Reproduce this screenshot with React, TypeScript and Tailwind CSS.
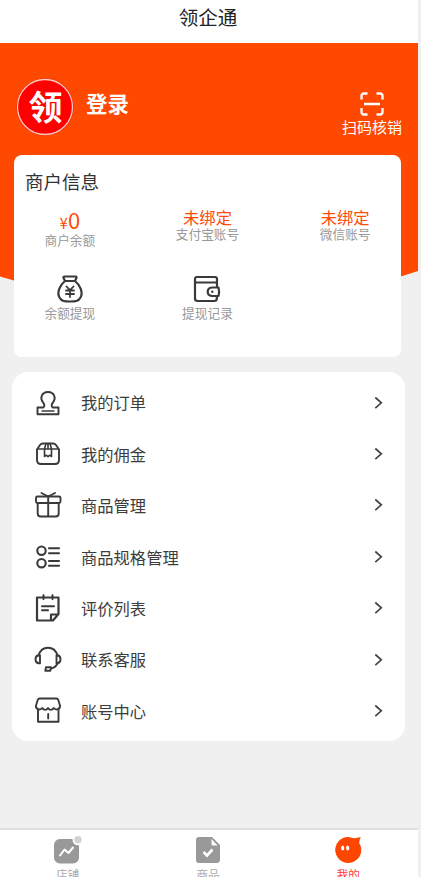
import type { ReactNode } from "react";

const Icon = ({ children }: { children: ReactNode }) => (
  <svg
    width="28"
    height="28"
    viewBox="0 0 28 28"
    fill="none"
    stroke="#3a3a3a"
    strokeWidth="1.9"
    strokeLinecap="round"
    strokeLinejoin="round"
    className="shrink-0"
  >
    {children}
  </svg>
);

const menuItems = [
  {
    label: "我的订单",
    icon: (
      <>
        <path d="M4 18.500h5.300c1.400-1 1.500-3-.3-5.200-1.500-1.900-2.200-4-1.300-6.300 2-5.300 10.600-5.300 12.600 0 .9 2.300.2 4.400-1.300 6.300-1.800 2.200-1.700 4.200-.3 5.200H24.500v6.700H3.500v-6.700z" />
        <path d="M8 22h12" strokeWidth="1.400" />
      </>
    ),
  },
  {
    label: "我的佣金",
    icon: (
      <>
        <path d="M3 9.500 6 5Q7 3.500 9 3.500h10q2 0 3 1.500l3 4.500V20q0 4-4 4H7q-4 0-4-4z" />
        <path
          d="M3.500 9h21M12 3.500 10.500 9v7.500l1.700-1.300 1.800 1.500 1.800-1.500 1.700 1.300V9L16 3.500M14 4v5"
          strokeWidth="1.600"
        />
      </>
    ),
  },
  {
    label: "商品管理",
    icon: (
      <>
        <rect x="2" y="5.500" width="24.500" height="6.500" rx="1.500" />
        <path d="M3.700 12v10.500q0 3 3 3h15q3 0 3-3V12M14.200 5.500v20M14.200 5.500 7.500 2M14.200 5.500 21 2" />
      </>
    ),
  },
  {
    label: "商品规格管理",
    icon: (
      <>
        <circle cx="7.500" cy="7.700" r="4.200" strokeWidth="2.100" />
        <circle cx="7.500" cy="20.200" r="4.200" strokeWidth="2.100" />
        <path d="M15 5.300h10M15 10.300h10M15 18h10M15 22.800h10" strokeWidth="2.100" />
      </>
    ),
  },
  {
    label: "评价列表",
    icon: (
      <>
        <path d="M3 3.500h21.500V20L19 26.500H3zM17 26v-5.500h7" strokeWidth="2.200" />
        <path d="M9.500 1.200V5M18.500 1.200V5M8 12.200h12M8 16.200h6" strokeWidth="2.100" />
      </>
    ),
  },
  {
    label: "联系客服",
    icon: (
      <>
        <path d="M4.500 9.500C6 4.500 9.500 1.700 14 1.700s8 2.800 9.500 7.800M23.500 17.500c-1.500 3-3.500 4.500-6.500 5" />
        <path d="M6 9.200H4.500q-3 .5-3 4t3 4H6zM22.500 9.200h1q3 .5 3 4t-3 4h-1zM12 21.300h5l-.7 3.400H11.300z" />
      </>
    ),
  },
  {
    label: "账号中心",
    icon: (
      <>
        <path d="M5.500 1.500h17q1.300 0 1.700 1.300L26 8.500c.5 4-4.500 5-6.300 2.500-1.500 2.500-4.200 2.500-5.700 0-1.500 2.500-4.200 2.500-5.700 0C6.500 13.500 1.500 12.500 2 8.500l1.800-5.700Q4.200 1.500 5.500 1.500z" />
        <path d="M4 12.500v12.300h20.500V12.500M14.200 17v4.500" />
      </>
    ),
  },
];

const MoneyBag = () => (
  <Icon>
    <path
      d="M9 6 7.500 2.800q-.5-1.300 1-1.300h11q1.500 0 1 1.300L19 6M9 6h10c5 4 8.500 11.500 5.500 16.500-2 4-5.500 4-10.500 4s-8.500 0-10.500-4C.5 17.500 4 10 9 6z"
      strokeWidth="2.200"
    />
    <path d="m10.500 11.500 3.500 3.700 3.500-3.700M10 15.500h8M10 19h8M14 15.500V22" strokeWidth="1.800" />
  </Icon>
);

const Wallet = () => (
  <Icon>
    <path
      d="M24 11.500V4.300q0-2.300-2-2.300H4Q2 2 2 4v19.500q0 2.500 2.500 2.500h17q2.300 0 2.300-2.500V22M2.500 7.500H24"
      strokeWidth="2.200"
    />
    <path d="M19 12.500h6.500q1.200 4.200 0 8.500H19q-4.300-.3-4.300-4.200T19 12.500z" strokeWidth="2.200" />
    <circle cx="19.300" cy="16.800" r=".6" strokeWidth="1.200" />
  </Icon>
);

const Stat = ({ value, label }: { value: string; label: string }) => (
  <div className="flex flex-col items-center pt-0.5">
    <span className="text-[16.300px] leading-[18px] text-[#ff4a08]">{value}</span>
    <span className="text-[12.700px] leading-[15px] text-[#999999]">{label}</span>
  </div>
);

const Header = () => (
  <div className="flex h-28 justify-between">
    <div className="flex pl-4 pt-[35px]">
      <svg width="58" height="58" viewBox="0 0 58 58">
        <circle cx="29" cy="29" r="28.500" fill="#e8100a" />
        <circle cx="29" cy="29" r="27.500" fill="#ff0000" stroke="#ffc8c0" strokeWidth="1.300" />
        <text
          x="29.500"
          y="41.500"
          textAnchor="middle"
          fill="#fff"
          fontSize="34"
          fontWeight="700"
          fontFamily="Noto Sans CJK SC, sans-serif"
        >
          领
        </text>
      </svg>
      <span className="ml-3 mt-[9px] text-[21.500px] leading-8 font-bold text-white">登录</span>
    </div>
    <div className="mr-4 flex flex-col items-center pt-[49px] text-white">
      <svg width="24" height="24" viewBox="0 0 24 24" fill="none" stroke="currentColor" strokeWidth="2.300">
        <path d="M1.500 7.500V4q0-2.500 2.500-2.500h3.500M16.500 1.500H20q2.500 0 2.500 2.500v3.500M22.500 16v4q0 2.500-2.500 2.500h-3.500M7.500 22.500H4q-2.500 0-2.500-2.500v-4M4 12h16" />
      </svg>
      <span className="text-[15px] leading-[22px]">扫码核销</span>
    </div>
  </div>
);

const MerchantCard = () => (
  <div className="mr-[17px] ml-3.5 h-[202px] rounded-lg bg-white pt-[14px]">
    <h2 className="pl-[11px] text-[18.500px] leading-[25px] text-[#333333]">商户信息</h2>
    <div className="-mx-[13px] mt-3 grid grid-cols-3">
      <div className="flex flex-col items-center pt-px">
        <span className="text-[22px] leading-[25px] text-[#ff4a08]">
          <span className="text-[15px]">¥</span>0
        </span>
        <span className="-mt-[3px] text-[12.700px] leading-[15px] text-[#999999]">商户余额</span>
      </div>
      <Stat value="未绑定" label="支付宝账号" />
      <Stat value="未绑定" label="微信账号" />
      <div className="mt-7 flex flex-col items-center">
        <MoneyBag />
        <span className="mt-px text-[12.700px] leading-[18px] text-[#999999]">余额提现</span>
      </div>
      <div className="mt-7 flex flex-col items-center">
        <Wallet />
        <span className="mt-px text-[12.700px] leading-[18px] text-[#999999]">提现记录</span>
      </div>
    </div>
  </div>
);

const TabBar = () => (
  <nav className="grid h-[49px] shrink-0 grid-cols-3 border-t-2 border-[#dedede] bg-white pt-1.5 text-[11.500px] leading-4 text-[#aaaaaa]">
    <div className="-ml-1 flex flex-col items-center">
      <svg width="30" height="28" viewBox="0 0 30 28">
        <rect x="1" y="3" width="25" height="24.500" rx="6" fill="#999" />
        <circle cx="25" cy="3.800" r="5.500" fill="#fff" />
        <circle cx="25" cy="3.800" r="3.700" fill="#d3d3d3" />
        <path
          d="m7 19.500 4.500-6 4 3.500 4.500-5.500"
          fill="none"
          stroke="#fff"
          strokeWidth="2"
          strokeLinecap="round"
          strokeLinejoin="round"
        />
      </svg>
      <span className="mt-0.5">店铺</span>
    </div>
    <div className="-ml-0.5 flex flex-col items-center">
      <svg width="28" height="28" viewBox="0 0 28 28">
        <path d="M5 1h13l8 8v14.500q0 3.500-3.500 3.500H5q-3 0-3-3V4q0-3 3-3z" fill="#999" />
        <path d="M17.500 3v5q0 1.500 1.500 1.500h4.500z" fill="#fff" />
        <path d="m9.500 16 3.500 3.500 5.500-6" fill="none" stroke="#fff" strokeWidth="2.600" />
      </svg>
      <span className="mt-0.5">商品</span>
    </div>
    <div className="flex flex-col items-center text-[#ff3d32]">
      <svg width="28" height="28" viewBox="0 0 28 28">
        <path d="M14 1c3 0 4 1.300 7 1.300L26.800 1q-1.600 3-1.600 6a13 13 0 1 1-11.200-6z" fill="#ff4600" />
        <ellipse cx="8.700" cy="12" rx="1.600" ry="2.600" fill="#fff" />
        <ellipse cx="13.700" cy="12" rx="1.600" ry="2.600" fill="#fff" />
      </svg>
      <span className="mt-0.5">我的</span>
    </div>
  </nav>
);

const App = () => {
  return (
    <div className="h-[877px] w-[421px] overflow-hidden bg-[#f0f0f0] font-['Noto_Sans_CJK_SC',sans-serif]">
      <div className="flex h-full w-[418px] flex-col">
        <header className="flex h-[43px] shrink-0 justify-center bg-white pt-0.5 pr-0.5 text-[19.500px] leading-[29px] text-[#222222]">
          领企通
        </header>
        <div className="relative isolate">
          <svg className="absolute top-0 left-0 -z-10" width="418" height="270" viewBox="0 0 418 270">
            <path d="M0 0H418V228Q209 298 0 233.500z" fill="#ff4800" />
          </svg>
          <Header />
          <MerchantCard />
        </div>
        <div className="mt-[15px] mr-[13px] ml-3 h-[369px] shrink-0 rounded-2xl bg-white pt-[5px]">
          {menuItems.map((item) => (
            <div key={item.label} className="flex h-[51.400px] items-center pr-[21px] pl-[22px]">
              <Icon>{item.icon}</Icon>
              <span className="ml-[19px] flex-1 text-[16.300px] text-[#3c3c3c]">{item.label}</span>
              <svg width="12" height="16" viewBox="0 0 12 16" fill="none" stroke="#444" strokeWidth="1.700">
                <path d="m3.300 2.500 6 5.300-6 5.300" />
              </svg>
            </div>
          ))}
        </div>
        <div className="flex-1" />
        <TabBar />
      </div>
    </div>
  );
};

export default App;
